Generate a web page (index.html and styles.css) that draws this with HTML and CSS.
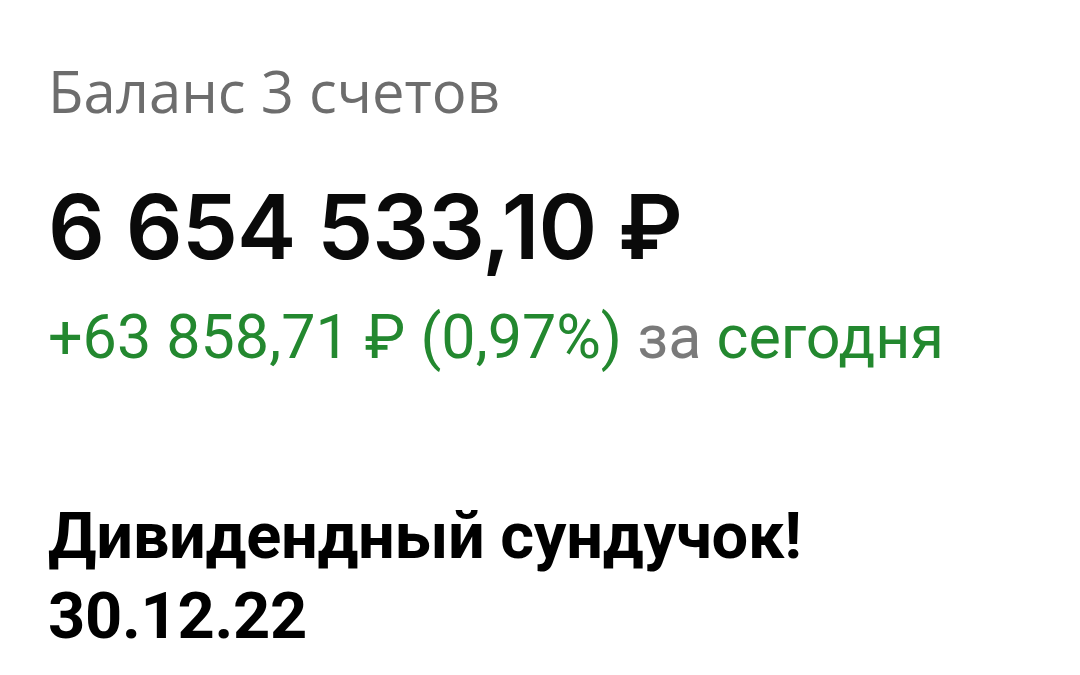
FILE: index.html
```html
<!DOCTYPE html>
<html>
<head>
    <title>Баланс</title>
    <link rel="stylesheet" href="styles.css">
</head>
<body>
    <div class="balance">
        <div class="balance-title">Баланс 3 счетов</div>
        <div class="balance-total">6 654 533,10 ₽</div>
        <div class="balance-change">+63 858,71 ₽ (0,97%) <span class="muted">за</span> сегодня</div>
    </div>
    <h1 class="caption">Дивидендный сундучок!<br>30.12.22</h1>
</body>
</html>
```

FILE: styles.css
```css
body {
    margin: 0;
    padding: 56px 0 0 48px;
    background: #ffffff;
    font-family: "Open Sans", sans-serif;
}
.balance-title {
    font-size: 58px;
    line-height: 70px;
    color: #6d6d6d;
}
.balance-total {
    margin-top: 51px;
    font-family: Inter, "Open Sans", sans-serif;
    font-weight: 600;
    font-size: 89px;
    line-height: 100px;
    color: #0a0a0a;
    letter-spacing: -0.8px;
}
.balance-change {
    margin-top: 22px;
    font-family: Roboto, sans-serif;
    font-size: 61px;
    line-height: 76px;
    color: #23882f;
}
.muted {
    color: #7a7a7a;
}
.caption {
    margin: 121px 0 0;
    font-family: Roboto, sans-serif;
    font-weight: 700;
    font-size: 65px;
    line-height: 80px;
    letter-spacing: -0.3px;
    color: #000000;
}
```
